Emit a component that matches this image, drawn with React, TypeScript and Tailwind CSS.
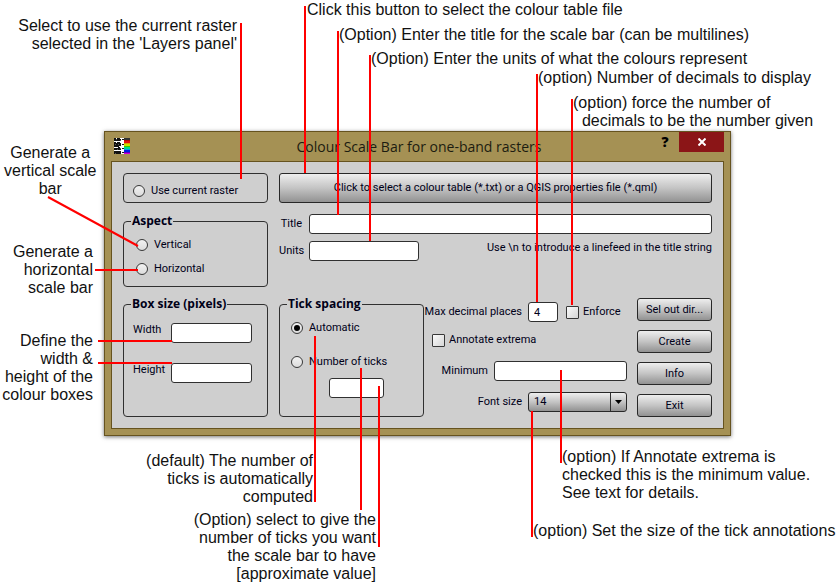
import type { ReactNode } from "react";

const field =
  "h-5 min-w-0 rounded-[3px] border border-[#303030] bg-white px-[5px] outline-none";
const pushButton =
  "rounded-[3px] border border-[#282828] bg-linear-to-b from-[#eeeeee] via-[#c4c4c4] to-[#929292]";
const radio =
  "grid size-3 shrink-0 appearance-none place-items-center rounded-full border border-[#383838] bg-linear-to-b from-[#f2f2f2] to-[#dcdcdc] before:size-[6px] before:rounded-full checked:before:bg-black";
const checkbox =
  "size-[13px] shrink-0 appearance-none rounded-[1px] border border-[#383838] bg-linear-to-br from-[#fafafa] to-[#d6d6d6] checked:bg-[#404040]";

function Radio({ name, label, checked }: { name: string; label: string; checked?: boolean }) {
  return (
    <label className="flex items-center gap-[6px]">
      <input type="radio" name={name} defaultChecked={checked} className={radio} />
      {label}
    </label>
  );
}

function Group({ title, className, children }: { title: string; className: string; children: ReactNode }) {
  return (
    <fieldset className={`min-w-0 rounded-[4px] border border-[#303030] ${className}`}>
      <legend className="ml-[7px] px-px font-['Open_Sans',sans-serif] text-[12px] font-bold">{title}</legend>
      {children}
    </fieldset>
  );
}

const stripes = ["#303030", "#b00808", "#e01010", "#d8a000", "#c8e000", "#30d000", "#00d890", "#00a0e8", "#0020e0", "#6000c0", "#d000d8"];

function AppIcon() {
  return (
    <svg width="16" height="16" viewBox="0 0 16 16" shapeRendering="crispEdges" aria-hidden="true">
      <rect width="16" height="16" fill="#fff" />
      <path
        fill="#111"
        d="M0 0h2v1H0zM3 0h3v1H3zM0 1h7v2H0zM0 4h2v1H0zM3 4h3v1H3zM0 5h7v3H0zM0 8h5v1H0zM0 10h7v2H0zM4 9h2v1H4zM0 13h7v3H0zM8 1h2v1H8zM8 6h2v1H8zM8 10h2v1H8zM8 14h2v1H8z"
      />
      <path fill="#555" d="M2 1h1v1H2zM4 6h1v1H4zM1 6h1v1H1zM3 11h1v1H3zM1 15h1v1H1zM6 2h1v1H6zM6 10h1v1H6z" />
      {stripes.map((color, i) => (
        <rect key={color} x="10" y={Math.round(i * 1.5)} width="6" height="2" fill={color} />
      ))}
    </svg>
  );
}

function TitleBar() {
  return (
    <header className="grid h-[29px] grid-cols-[1fr_auto_1fr] pr-[6px] pl-[9px]">
      <div className="pt-[6px]">
        <AppIcon />
      </div>
      <h1 className="self-center font-['Open_Sans',sans-serif] text-[14px] leading-5 text-[#1c1c10]">
        Colour Scale Bar for one-band rasters
      </h1>
      <div className="flex h-5 justify-end gap-2">
        <button type="button" aria-label="Help" className="w-3 font-['Open_Sans',sans-serif] text-[14px] leading-5 font-extrabold text-black">
          ?
        </button>
        <button type="button" aria-label="Close" className="grid w-[45px] place-items-center bg-[#8b1517]">
          <svg width="8" height="8" viewBox="0 0 8 8" stroke="#fff" strokeWidth="2" aria-hidden="true">
            <path d="M.5.5l7 7M7.5.5l-7 7" />
          </svg>
        </button>
      </div>
    </header>
  );
}

function Dialog() {
  return (
    <section className="w-[627px] border border-[#66531f] bg-[#a59154] font-['Roboto','Noto_Sans',sans-serif] text-[11px] leading-[14px] text-[#000018] shadow-[0_1px_4px_rgba(0,0,0,0.55)]">
      <TitleBar />
      <form className="mx-[6px] mb-[6px] flex gap-[11px] border border-[#66531f] bg-[#cfcfcf] p-[11px]">
        <div className="flex w-[145px] flex-col">
          <div className="flex h-[30px] items-center rounded-[4px] border border-[#303030] pt-[6px] pl-[9px]">
            <Radio name="source" label="Use current raster" />
          </div>
          <Group title="Aspect" className="mt-[11px] h-[73px]">
            <div className="flex flex-col gap-[10px] pt-[10px] pl-3">
              <Radio name="aspect" label="Vertical" />
              <Radio name="aspect" label="Horizontal" />
            </div>
          </Group>
          <Group title="Box size (pixels)" className="mt-[10px] h-[120px]">
            <div className="flex flex-col gap-5 pt-3 pr-[15px] pl-[9px]">
              <label className="flex justify-between">
                Width
                <input type="text" className={`${field} w-[81px]`} />
              </label>
              <label className="flex justify-between">
                Height
                <input type="text" className={`${field} w-[81px]`} />
              </label>
            </div>
          </Group>
        </div>

        <div className="flex min-w-0 flex-1 flex-col">
          <button type="button" className={`${pushButton} h-[30px]`}>
            Click to select a colour table (*.txt) or a QGIS properties file (*.qml)
          </button>
          <label className="mt-[11px] flex items-center">
            <span className="w-[30px] pr-[7px] text-right">Title</span>
            <input type="text" className={`${field} flex-1`} />
          </label>
          <div className="mt-[7px] flex justify-between">
            <label className="flex items-center">
              <span className="w-[30px] pr-[7px] text-right">Units</span>
              <input type="text" className={`${field} w-[110px]`} />
            </label>
            <p>Use \n to introduce a linefeed in the title string</p>
          </div>

          <div className="mt-auto flex">
            <Group title="Tick spacing" className="h-[120px] w-[145px]">
              <div className="flex flex-col pt-[10px] pl-[11px]">
                <Radio name="ticks" label="Automatic" checked />
                <div className="mt-5">
                  <Radio name="ticks" label="Number of ticks" />
                </div>
                <input type="text" aria-label="Tick count" className={`${field} mt-[9px] ml-[38px] w-[55px]`} />
              </div>
            </Group>

            <div className="ml-[7px] flex flex-1 flex-col pt-[5px]">
              <div className="flex items-center">
                <label htmlFor="decimals" className="flex w-[97px] justify-end pr-[6px] whitespace-nowrap">
                  Max decimal places
                </label>
                <input id="decimals" type="text" defaultValue="4" className={`${field} w-[30px]`} />
                <label className="ml-2 flex items-center gap-1">
                  <input type="checkbox" className={checkbox} />
                  Enforce
                </label>
              </div>
              <label className="mt-[11px] ml-px flex items-center gap-1">
                <input type="checkbox" className={checkbox} />
                Annotate extrema
              </label>
              <label className="mt-[14px] flex items-center justify-end gap-[6px]">
                Minimum
                <input type="text" className={`${field} w-[133px]`} />
              </label>
              <div className="mt-[11px] flex items-center">
                <label htmlFor="fontsize" className="flex w-[97px] justify-end pr-[6px]">
                  Font size
                </label>
                <div className="relative flex-1">
                  <select id="fontsize" defaultValue="14" className={`${pushButton} block h-5 w-full appearance-none px-[5px] leading-[18px] outline-none`}>
                    <option>12</option>
                    <option>14</option>
                    <option>16</option>
                  </select>
                  <span className="pointer-events-none absolute inset-y-px right-px grid w-4 place-items-center border-l border-[#303030]">
                    <svg width="7" height="4" viewBox="0 0 7 4" aria-hidden="true">
                      <path d="M0 0h7L3.500 4z" />
                    </svg>
                  </span>
                </div>
              </div>
            </div>

            <div className="ml-[10px] flex w-[75px] flex-col justify-end gap-[9px]">
              {["Sel out dir...", "Create", "Info", "Exit"].map((label) => (
                <button key={label} type="button" className={`${pushButton} h-[23px]`}>
                  {label}
                </button>
              ))}
            </div>
          </div>
        </div>
      </form>
    </section>
  );
}

const callouts = [
  { place: "top-[17px] right-[599px] text-right", lines: ["Select to use the current raster", "selected in the 'Layers panel'"] },
  { place: "top-px left-[307px]", lines: ["Click this button to select the colour table file"] },
  { place: "top-[26px] left-[339px]", lines: ["(Option) Enter the title for the scale bar (can be multilines)"] },
  { place: "top-[50px] left-[371px]", lines: ["(Option) Enter the units of what the colours represent"] },
  { place: "top-[69px] left-[538px]", lines: ["(option) Number of decimals to display"] },
  { place: "top-[94px] left-[573px]", lines: ["(option) force the number of", "  decimals to be the number given"] },
  { place: "top-[144px] left-1 text-center", lines: ["Generate a", "vertical scale", "bar"] },
  { place: "top-[243px] right-[743px] text-right", lines: ["Generate a", "horizontal", "scale bar"] },
  { place: "top-[332px] right-[743px] text-right", lines: ["Define the", "width &", "height of the", "colour boxes"] },
  { place: "top-[452px] right-[523px] text-right", lines: ["(default) The number of", "ticks is automatically", "computed"] },
  { place: "top-[511px] right-[460px] text-right", lines: ["(Option) select to give the", "number of ticks you want", "the scale bar to have", "[approximate value]"] },
  { place: "top-[448px] left-[562px]", lines: ["(option) If Annotate extrema is", "checked this is the minimum value.", "See text for details."] },
  { place: "top-[522px] left-[533px]", lines: ["(option) Set the size of the tick annotations"] },
];

const leaders = [
  "M241 23V179",
  "M305 6V173",
  "M338 31V215",
  "M370 55V241",
  "M537 74V302",
  "M572 99V305",
  "M48 197L138 246",
  "M95 270H138",
  "M98 341H172",
  "M98 363H172",
  "M315 336V502",
  "M361 368V510",
  "M379 386V547",
  "M561 370V463",
  "M532 411V537",
];

export default function App() {
  return (
    <main className="min-h-screen overflow-x-auto bg-white">
      <figure className="relative w-[836px] pt-[131px] pb-[148px] pl-[104px]">
        <Dialog />
        <svg className="pointer-events-none absolute inset-0 size-full" fill="none" stroke="#ff0000" strokeWidth="2" aria-hidden="true">
          <path d={leaders.join("")} />
        </svg>
        {callouts.map(({ place, lines }) => (
          <p
            key={lines[0]}
            className={`absolute font-['Liberation_Sans',Arial,sans-serif] text-base leading-[18px] whitespace-pre text-[#111111] ${place}`}
          >
            {lines.map((line) => (
              <span key={line} className="block">
                {line}
              </span>
            ))}
          </p>
        ))}
      </figure>
    </main>
  );
}
